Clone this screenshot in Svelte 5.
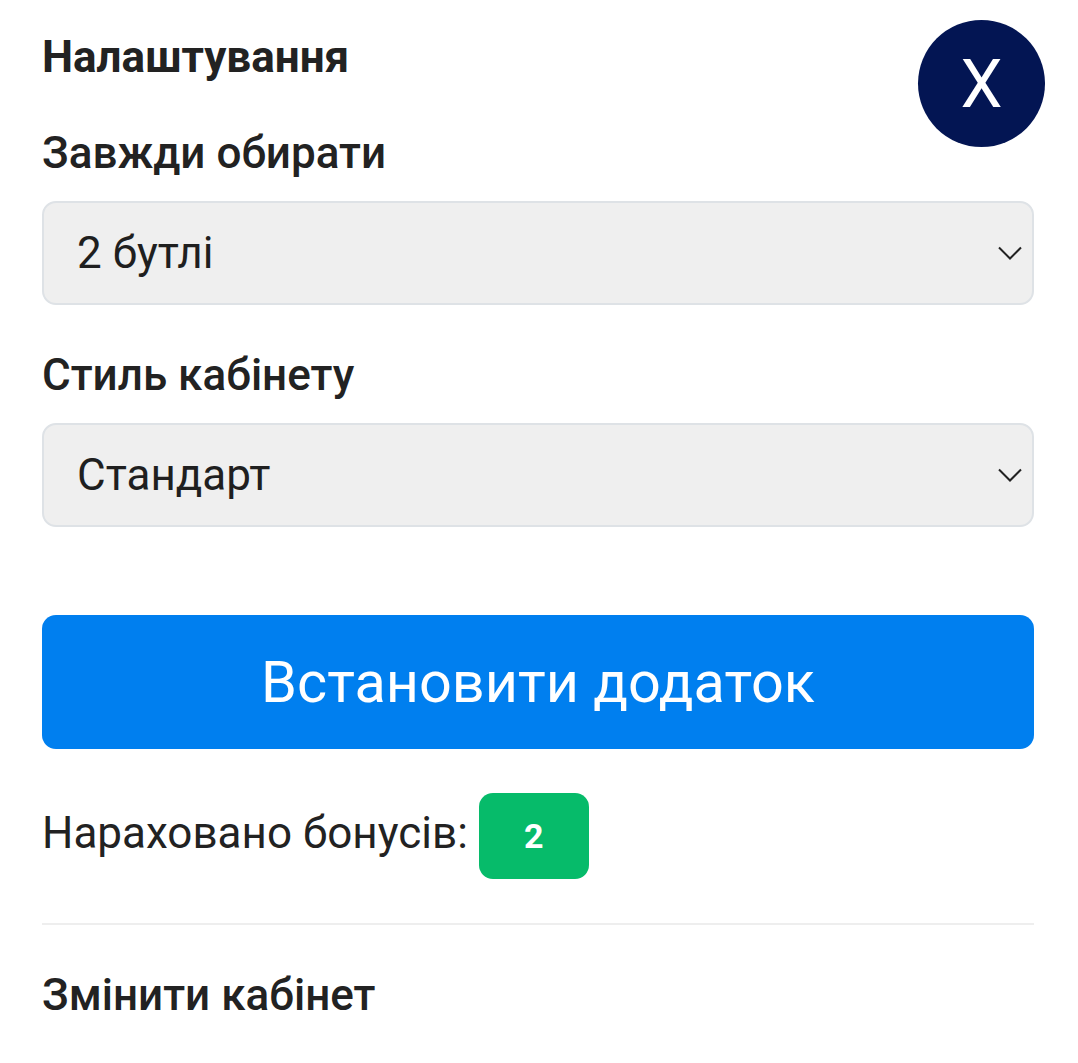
<script>
  let always = "2 бутлі";
  let style = "Стандарт";
  const bonus = 2;
</script>

<div class="settings">
  <button class="close">X</button>
  <h3 class="title">Налаштування</h3>

  <div class="field">
    <div class="label">Завжди обирати</div>
    <div class="select">
      <span>{always}</span>
      <svg width="24" height="14" viewBox="0 0 24 14"><path d="M1 1.5 L12 12.5 L23 1.5" fill="none" stroke="#222" stroke-width="2"/></svg>
    </div>
  </div>

  <div class="field">
    <div class="label">Стиль кабінету</div>
    <div class="select">
      <span>{style}</span>
      <svg width="24" height="14" viewBox="0 0 24 14"><path d="M1 1.5 L12 12.5 L23 1.5" fill="none" stroke="#222" stroke-width="2"/></svg>
    </div>
  </div>

  <button class="install">Встановити додаток</button>

  <div class="bonus">
    <span class="bonus-text">Нараховано бонусів:</span>
    <span class="badge">{bonus}</span>
  </div>

  <hr />

  <div class="label change">Змінити кабінет</div>
</div>

<style>
  :global(body) { margin: 0; background: #fff; }
  .settings {
    position: relative;
    height: 1063px;
    box-sizing: border-box;
    padding: 34px 44px 0 42px;
    font-family: Roboto, "Noto Sans", sans-serif;
    color: #222;
    overflow: hidden;
  }
  .close {
    position: absolute; top: 20px; left: 918px;
    width: 127px; height: 127px; border-radius: 50%; border: none;
    background: #031553; color: #fff; font: 400 67px Roboto, sans-serif; padding: 0;
  }
  .title { margin: 0 0 47px; font-size: 44px; line-height: 46px; font-weight: 700; }
  .field { margin-bottom: 44px; }
  .label { font-size: 44px; line-height: 50px; font-weight: 500; padding-top: 1px; margin-bottom: 23px; }
  .select {
    height: 104px; box-sizing: border-box;
    display: flex; align-items: center; justify-content: space-between;
    padding: 0 10px 0 33px;
    background: #efefef; border: 2px solid #dee2e6; border-radius: 14px;
    font-size: 44px; color: #1f1f1f;
  }
  .install {
    display: block; width: 100%; height: 134px; margin-top: 88px;
    background: #007fef; color: #fff; border: none; border-radius: 14px;
    font: 400 57.6px Roboto, sans-serif;
  }
  .bonus { display: flex; align-items: center; gap: 11px; margin-top: 44px; font-size: 44px; }
  .bonus-text { margin-bottom: 6px; }
  .badge {
    width: 110px; height: 86px; border-radius: 14px; background: #06bb6a; color: #fff;
    display: flex; align-items: center; justify-content: center;
    font-size: 34px; font-weight: 700;
  }
  hr { border: none; border-top: 2px solid #eee; margin: 44px 0 44px; }
  .change { margin: 0; }
</style>
